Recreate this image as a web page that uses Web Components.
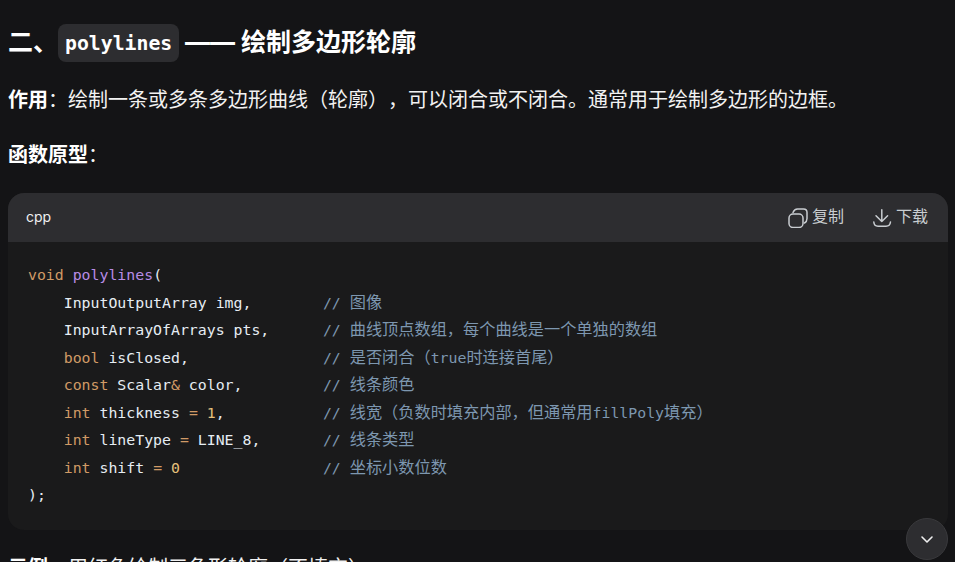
<!DOCTYPE html>
<html lang="zh">
<head>
<meta charset="utf-8">
<title>polylines</title>
<style>
    html, body { height: 100%; }
    body {
        margin: 0;
        padding: 24px 7px 0 8px;
        box-sizing: border-box;
        overflow: hidden;
        background: #141416;
        color: #fff;
        font-family: Inter, "Noto Sans CJK SC", sans-serif;
    }
</style>
</head>
<body>
<doc-heading>二、<inline-code>polylines</inline-code> —— 绘制多边形轮廓</doc-heading>
<doc-para><b>作用</b>：绘制一条或多条多边形曲线（轮廓），可以闭合或不闭合。通常用于绘制多边形的边框。</doc-para>
<doc-para><b>函数原型</b>：</doc-para>
<code-block lang="cpp">
<code-line><code-tok kind="kw">void</code-tok> <code-tok kind="fn">polylines</code-tok>(</code-line>
<code-line>    InputOutputArray img,        <code-tok kind="cm">// <code-tok kind="zh">图像</code-tok></code-tok></code-line>
<code-line>    InputArrayOfArrays pts,      <code-tok kind="cm">// <code-tok kind="zh">曲线顶点数组，每个曲线是一个单独的数组</code-tok></code-tok></code-line>
<code-line>    <code-tok kind="kw">bool</code-tok> isClosed,               <code-tok kind="cm">// <code-tok kind="zh">是否闭合（</code-tok>true<code-tok kind="zh">时连接首尾）</code-tok></code-tok></code-line>
<code-line>    <code-tok kind="kw">const</code-tok> Scalar<code-tok kind="kw">&amp;</code-tok> color,         <code-tok kind="cm">// <code-tok kind="zh">线条颜色</code-tok></code-tok></code-line>
<code-line>    <code-tok kind="kw">int</code-tok> thickness <code-tok kind="kw">=</code-tok> <code-tok kind="num">1</code-tok>,           <code-tok kind="cm">// <code-tok kind="zh">线宽（负数时填充内部，但通常用</code-tok>fillPoly<code-tok kind="zh">填充）</code-tok></code-tok></code-line>
<code-line>    <code-tok kind="kw">int</code-tok> lineType <code-tok kind="kw">=</code-tok> LINE_8,       <code-tok kind="cm">// <code-tok kind="zh">线条类型</code-tok></code-tok></code-line>
<code-line>    <code-tok kind="kw">int</code-tok> shift <code-tok kind="kw">=</code-tok> <code-tok kind="num">0</code-tok>                <code-tok kind="cm">// <code-tok kind="zh">坐标小数位数</code-tok></code-tok></code-line>
<code-line>);</code-line>
</code-block>
<doc-para><b>示例</b>：用红色绘制三角形轮廓（不填充）</doc-para>
<scroll-button></scroll-button>

<script>
/**
 * Section heading with inline code slotted in
 */
class DocHeading extends HTMLElement {
    connectedCallback() {
        this.attachShadow({ mode: 'open' }).innerHTML = `
            <style>
                :host {
                    display: block;
                    font: 700 25px/36px Inter, "Noto Sans CJK SC", sans-serif;
                    color: #fff;
                    margin-bottom: 23px;
                    text-spacing-trim: space-all;
                }
            </style>
            <slot></slot>
        `;
    }
}

class InlineCode extends HTMLElement {
    connectedCallback() {
        this.attachShadow({ mode: 'open' }).innerHTML = `
            <style>
                :host {
                    display: inline-block;
                    height: 38px;
                    padding: 0 7px;
                    vertical-align: top;
                    border-radius: 8px;
                    background: #2d2d30;
                    font: 700 19.8px/40px "DejaVu Sans Mono", monospace;
                }
            </style>
            <slot></slot>
        `;
    }
}

class DocPara extends HTMLElement {
    connectedCallback() {
        this.attachShadow({ mode: 'open' }).innerHTML = `
            <style>
                :host {
                    display: block;
                    font: 400 20px/30px Inter, "Noto Sans CJK SC", sans-serif;
                    color: #f2f2f2;
                    margin-bottom: 25px;
                    white-space: nowrap;
                    text-spacing-trim: space-all;
                }
                ::slotted(b) { font-weight: 700; color: #fff; }
            </style>
            <slot></slot>
        `;
    }
}

/**
 * Code block with a toolbar; the code lines come in through the slot
 */
class CodeBlock extends HTMLElement {
    connectedCallback() {
        const lang = this.getAttribute('lang') || '';
        this.attachShadow({ mode: 'open' }).innerHTML = `
            <style>
                :host {
                    display: block;
                    margin: -2px 0 23px;
                    border-radius: 16px;
                    overflow: hidden;
                    background: #1a1a1b;
                }
                .bar {
                    display: flex;
                    align-items: center;
                    justify-content: space-between;
                    height: 49px;
                    padding: 0 20px 0 18px;
                    background: #2d2d30;
                    color: #f0f0f0;
                    font: 400 14px Inter, "Noto Sans CJK SC", sans-serif;
                }
                .lang { line-height: 14px; padding-bottom: 1px; }
                .actions { display: flex; gap: 29px; }
                .action {
                    display: flex;
                    align-items: center;
                    gap: 3px;
                    font-size: 16px;
                    color: #c9cdd1;
                }
                .action.copy { gap: 4px; }
                .label { line-height: 16px; padding-bottom: 3px; }
                svg { display: block; fill: none; stroke: #c9cdd1; stroke-width: 1.5; stroke-linecap: round; stroke-linejoin: round; }
                .code {
                    padding: 20px 20px 20.5px;
                    font: 400 14.85px/27.5px "DejaVu Sans Mono", monospace;
                    color: #e6edf3;
                    text-spacing-trim: space-all;
                }
            </style>
            <div class="bar">
                <span class="lang">${lang}</span>
                <div class="actions">
                    <span class="action copy">
                        <svg width="20" height="20" viewBox="0 0 20 20">
                            <rect x="1" y="6" width="14" height="13.500" rx="4"/>
                            <path d="M5 4.500C6 2 7.500 1 9.500 1H15.500C17.800 1 19 2.500 19 4.500V10.500C19 12.500 18.200 14 16.500 15"/>
                        </svg>
                        <span class="label">复制</span>
                    </span>
                    <span class="action">
                        <svg width="20" height="20" viewBox="0 0 20 20">
                            <path d="M8.800 1.800V13.500M3 7.800L8.800 13.500L14.600 7.800"/>
                            <path d="M0.800 14C1 16.500 2.500 18.200 5 18.200H13C15.500 18.200 17.200 16.500 17.500 14"/>
                        </svg>
                        <span class="label">下载</span>
                    </span>
                </div>
            </div>
            <div class="code"><slot></slot></div>
        `;
    }
}

class CodeLine extends HTMLElement {
    connectedCallback() {
        // no whitespace in this shadow root: the host keeps spaces as written
        this.attachShadow({ mode: 'open' }).innerHTML =
            '<style>:host { display: block; height: 27.5px; white-space: pre; }</style><slot></slot>';
    }
}

class CodeTok extends HTMLElement {
    connectedCallback() {
        this.attachShadow({ mode: 'open' }).innerHTML =
            `<style>
                :host { display: inline; }
                :host([kind="kw"]) { color: #d19a66; }
                :host([kind="fn"]) { color: #b88ce6; }
                :host([kind="num"]) { color: #e5c07b; }
                :host([kind="cm"]) { color: #7d97b0; }
                :host([kind="zh"]) { font-family: "Noto Sans CJK SC", sans-serif; font-size: 16.2px; line-height: 1; }
            </style><slot></slot>`;
    }
}

class ScrollButton extends HTMLElement {
    connectedCallback() {
        this.attachShadow({ mode: 'open' }).innerHTML = `
            <style>
                :host {
                    position: fixed;
                    left: 906px;
                    top: 518px;
                    width: 42px;
                    height: 42px;
                    box-sizing: border-box;
                    display: flex;
                    align-items: center;
                    justify-content: center;
                    border-radius: 50%;
                    border: 1px solid #3a3a3d;
                    background: #2d2d30;
                }
                svg { fill: none; stroke: #f0f0f0; stroke-width: 1.6; stroke-linecap: round; stroke-linejoin: round; }
            </style>
            <svg width="14" height="14" viewBox="0 0 14 14"><path d="M2 5L7 10L12 5"/></svg>
        `;
    }
}

customElements.define('doc-heading', DocHeading);
customElements.define('inline-code', InlineCode);
customElements.define('doc-para', DocPara);
customElements.define('code-block', CodeBlock);
customElements.define('code-line', CodeLine);
customElements.define('code-tok', CodeTok);
customElements.define('scroll-button', ScrollButton);
</script>
</body>
</html>
